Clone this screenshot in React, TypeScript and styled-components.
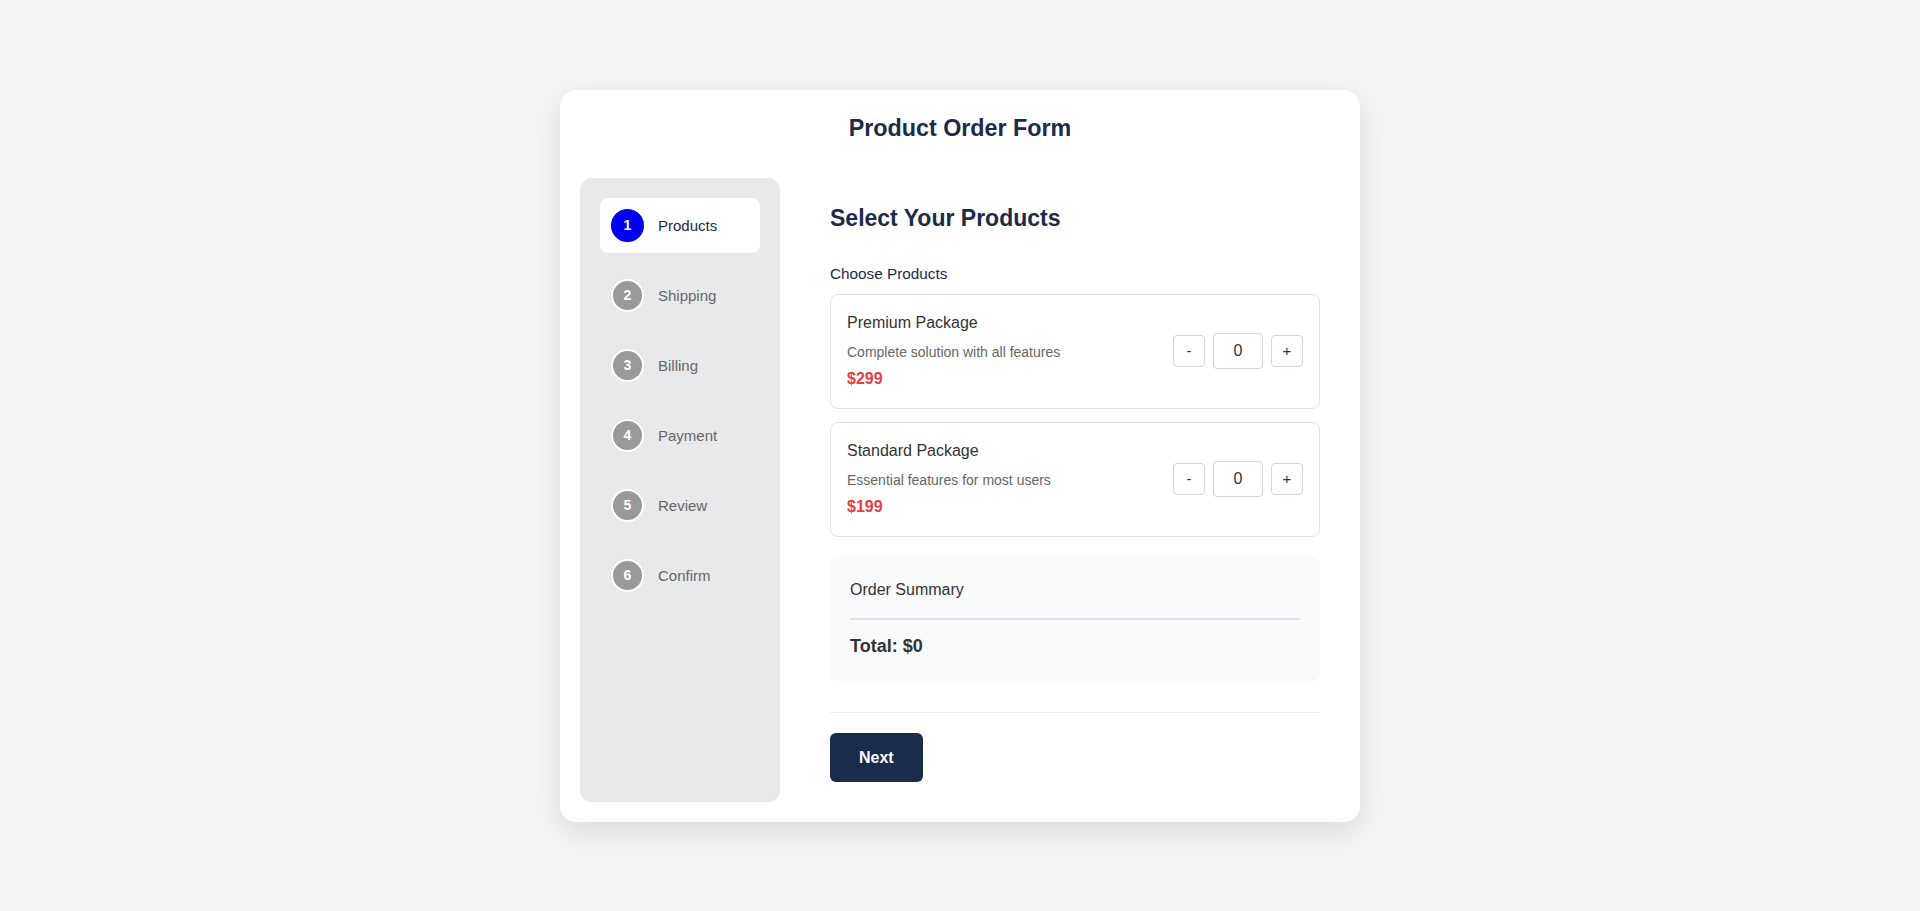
import React, { useState } from 'react';
import styled, { createGlobalStyle } from 'styled-components';

const GlobalStyle = createGlobalStyle`
  html, body {
    margin: 0;
    padding: 0;
    background: #f3f4f6;
    font-family: 'Liberation Sans', Arial, sans-serif;
  }
  * {
    box-sizing: border-box;
  }
`;

type Product = {
  id: string;
  name: string;
  description: string;
  price: number;
};

const PRODUCTS: Product[] = [
  { id: 'premium', name: 'Premium Package', description: 'Complete solution with all features', price: 299 },
  { id: 'standard', name: 'Standard Package', description: 'Essential features for most users', price: 199 },
];

const STEPS = ['Products', 'Shipping', 'Billing', 'Payment', 'Review', 'Confirm'];

const Page = styled.div`
  min-height: 911px;
  display: flex;
  align-items: center;
  justify-content: center;
`;

const Card = styled.div`
  width: 800px;
  background: #ffffff;
  border-radius: 16px;
  box-shadow: 0 10px 30px rgba(0, 0, 0, 0.1);
  padding: 20px;
`;

const Title = styled.h1`
  margin: 4px 0 36px;
  text-align: center;
  font-size: 23.3px;
  line-height: 28px;
  font-weight: 700;
  color: #1a2b4b;
`;

const Layout = styled.div`
  display: grid;
  grid-template-columns: 200px 1fr;
  column-gap: 30px;
`;

const Sidebar = styled.nav`
  background: #e8e9eb;
  border-radius: 12px;
  padding: 20px;
  display: flex;
  flex-direction: column;
  gap: 15px;
`;

const StepItem = styled.div<{ $active: boolean }>`
  height: 55px;
  display: flex;
  align-items: center;
  gap: 14px;
  padding: 0 11px;
  border-radius: 8px;
  background: ${(p) => (p.$active ? '#ffffff' : 'transparent')};
`;

const StepCircle = styled.span<{ $active: boolean }>`
  width: 33px;
  height: 33px;
  flex: none;
  border-radius: 50%;
  border: 2px solid ${(p) => (p.$active ? '#0000ee' : '#ffffff')};
  background: ${(p) => (p.$active ? '#0000ee' : '#999999')};
  color: #ffffff;
  font-size: 14px;
  font-weight: 700;
  display: flex;
  align-items: center;
  justify-content: center;
`;

const StepLabel = styled.span<{ $active: boolean }>`
  font-size: 15px;
  font-weight: ${(p) => (p.$active ? 500 : 400)};
  color: ${(p) => (p.$active ? '#1a2b4b' : '#666666')};
`;

const Main = styled.main`
  padding: 20px;
  display: flex;
  flex-direction: column;
`;

const Heading = styled.h2`
  margin: 7px 0 34px;
  font-size: 23px;
  line-height: 26px;
  font-weight: 700;
  color: #1a2b4b;
`;

const FieldLabel = styled.div`
  font-size: 15.3px;
  line-height: 18px;
  font-weight: 500;
  color: #1a2b4b;
  margin-bottom: 11px;
`;

const ProductList = styled.div`
  display: flex;
  flex-direction: column;
  gap: 13px;
`;

const ProductCard = styled.div`
  border: 1px solid #e2e2e2;
  border-radius: 8px;
  padding: 17px 16px 18px;
  display: flex;
  align-items: center;
  justify-content: space-between;
`;

const ProductInfo = styled.div`
  display: flex;
  flex-direction: column;
`;

const ProductName = styled.div`
  font-size: 16px;
  line-height: 22px;
  color: #333333;
`;

const ProductDesc = styled.div`
  margin-top: 8px;
  font-size: 14px;
  line-height: 20px;
  color: #666666;
`;

const ProductPrice = styled.div`
  margin-top: 6px;
  font-size: 16px;
  line-height: 22px;
  font-weight: 700;
  color: #e53e3e;
`;

const Qty = styled.div`
  display: flex;
  align-items: center;
  gap: 8px;
`;

const QtyButton = styled.button`
  width: 32px;
  height: 32px;
  border: 1px solid #d4d4d4;
  border-radius: 4px;
  background: #ffffff;
  color: #333333;
  font-family: inherit;
  font-size: 15px;
  padding: 0;
  cursor: pointer;
`;

const QtyInput = styled.input`
  width: 50px;
  height: 36px;
  border: 1px solid #d4d4d4;
  border-radius: 4px;
  text-align: center;
  font-family: inherit;
  font-size: 16px;
  color: #333333;
  padding: 0;
`;

const Summary = styled.div`
  margin-top: 20px;
  background: #f8fafc;
  border-radius: 8px;
  padding: 21px 20px 21px;
`;

const SummaryTitle = styled.div`
  font-size: 16px;
  line-height: 24px;
  color: #333333;
  padding-bottom: 16px;
  border-bottom: 2px solid #e2e4e7;
`;

const Total = styled.div`
  margin-top: 13px;
  font-size: 18px;
  line-height: 27px;
  font-weight: 700;
  color: #333333;
`;

const Footer = styled.div`
  margin-top: 31px;
  border-top: 1px solid #eeeeee;
  padding-top: 20px;
  display: flex;
`;

const NextButton = styled.button`
  background: #1a2b4b;
  color: #ffffff;
  border: none;
  border-radius: 6px;
  padding: 15px 29px;
  font-family: inherit;
  font-size: 16px;
  line-height: 19px;
  font-weight: 700;
  cursor: pointer;
`;

export default function App() {
  const [qty, setQty] = useState<Record<string, number>>({ premium: 0, standard: 0 });
  const total = PRODUCTS.reduce((sum, p) => sum + p.price * (qty[p.id] || 0), 0);

  const change = (id: string, delta: number) => {
    setQty((q) => ({ ...q, [id]: Math.max(0, (q[id] || 0) + delta) }));
  };

  return (
    <>
      <GlobalStyle />
      <Page>
        <Card>
          <Title>Product Order Form</Title>
          <Layout>
            <Sidebar>
              {STEPS.map((step, i) => (
                <StepItem key={step} $active={i === 0}>
                  <StepCircle $active={i === 0}>{i + 1}</StepCircle>
                  <StepLabel $active={i === 0}>{step}</StepLabel>
                </StepItem>
              ))}
            </Sidebar>
            <Main>
              <Heading>Select Your Products</Heading>
              <FieldLabel>Choose Products</FieldLabel>
              <ProductList>
                {PRODUCTS.map((p) => (
                  <ProductCard key={p.id}>
                    <ProductInfo>
                      <ProductName>{p.name}</ProductName>
                      <ProductDesc>{p.description}</ProductDesc>
                      <ProductPrice>${p.price}</ProductPrice>
                    </ProductInfo>
                    <Qty>
                      <QtyButton onClick={() => change(p.id, -1)}>-</QtyButton>
                      <QtyInput
                        type="text"
                        value={qty[p.id]}
                        onChange={(e) => {
                          const n = parseInt(e.target.value, 10);
                          setQty((q) => ({ ...q, [p.id]: Number.isNaN(n) ? 0 : Math.max(0, n) }));
                        }}
                      />
                      <QtyButton onClick={() => change(p.id, 1)}>+</QtyButton>
                    </Qty>
                  </ProductCard>
                ))}
              </ProductList>
              <Summary>
                <SummaryTitle>Order Summary</SummaryTitle>
                <Total>Total: ${total}</Total>
              </Summary>
              <Footer>
                <NextButton>Next</NextButton>
              </Footer>
            </Main>
          </Layout>
        </Card>
      </Page>
    </>
  );
}
